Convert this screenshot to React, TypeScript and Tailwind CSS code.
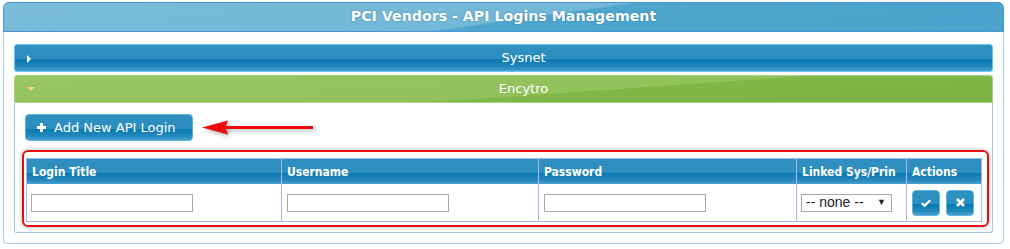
const blueGloss =
  'bg-[linear-gradient(to_bottom,#2f90c1_0%,#2c8ebf_55%,#0878b1_56%,#2689bf_85%,#47a1d0_100%)]';

const columns = [
  { title: 'Login Title', width: 'w-[254px]' },
  { title: 'Username', width: 'w-[257px]' },
  { title: 'Password', width: 'w-[258px]' },
  { title: 'Linked Sys/Prin', width: 'w-[110px]' },
  { title: 'Actions', width: 'w-[75px]' },
];

function TextCell() {
  return (
    <div className="h-[18px] w-[162px] border border-[#a9a9a9] bg-white" />
  );
}

function IconButton({ children }: { children: React.ReactNode }) {
  return (
    <div className={`flex h-[26px] w-[28px] items-center justify-center rounded-[4px] border border-[#5fb2de] ${blueGloss}`}>
      {children}
    </div>
  );
}

export default function App() {
  return (
    <div className="min-h-screen bg-white pl-[3px] pt-[2px] font-['DejaVu_Sans',sans-serif]">
      <div className="w-[1001px] rounded-t-[6px] rounded-b-[4px] border border-[#a6c9e2] bg-[#fdfefe]">
        {/* page title */}
        <div className="-m-px flex h-[30px] items-center justify-center rounded-t-[6px] border border-[#4b92d8] bg-[linear-gradient(172deg,#7abcd9_0%,#74b8d7_52%,#4ea6ce_53%,#49a2cb_100%)]">
          <h1 className="text-[14.2px] font-bold text-white [text-shadow:0_0_2px_rgba(40,110,160,0.7)]">
            PCI Vendors - API Logins Management
          </h1>
        </div>

        <div className="px-[10px] pt-[13px] pb-[10px]">
          {/* Sysnet (collapsed) */}
          <div className={`relative flex h-[28px] items-center justify-center rounded-[3px] border border-[#6cc6ee] pl-[40px] ${blueGloss}`}>
            <span className="absolute left-[12px] top-[10px] h-0 w-0 border-y-[4px] border-l-[4px] border-y-transparent border-l-white" />
            <span className="text-[13px] text-white">Sysnet</span>
          </div>

          {/* Encytro (expanded) */}
          <div className="relative mt-[3px] flex h-[28px] items-center justify-center rounded-t-[3px] border border-[#a9d47e] pl-[40px] bg-[linear-gradient(176deg,#97c662_0%,#92c25c_58%,#7fb748_59%,#7ab443_100%)]">
            <span className="absolute left-[12px] top-[11px] h-0 w-0 border-x-[4px] border-t-[4px] border-x-transparent border-t-[#f6d66a]" />
            <span className="text-[13px] text-white">Encytro</span>
          </div>

          <div className="rounded-b-[3px] border border-t-0 border-[#a6c9e2] bg-white pl-[7px] pr-[3px] pt-[11px] pb-[5px]">
            <div className="flex items-center pl-[3px]">
              <div className={`flex h-[27px] w-[168px] items-center gap-[8px] rounded-[4px] border border-[#5fb2de] pl-[11px] text-[13px] text-white ${blueGloss}`}>
                <svg width="9" height="9" viewBox="0 0 9 9">
                  <path d="M3 0h3v3h3v3H6v3H3V6H0V3h3z" fill="white" />
                </svg>
                Add New API Login
              </div>
              <svg width="114" height="20" viewBox="0 0 114 20" className="ml-[9px] drop-shadow-[2px_2px_2px_rgba(0,0,0,0.3)]">
                <path d="M0 9.5 L26 2.5 L24 8 L111 8 L111 11 L24 11 L26 16.5 Z" fill="#ee0a0a" />
              </svg>
            </div>

            {/* login grid, highlighted */}
            <div className="mt-[9px] rounded-[6px] border-2 border-[#e51010] pt-[6px] pr-[5px] pb-[3px] pl-[2px] shadow-[0_0_4px_rgba(0,0,0,0.3)]">
              <div className="w-[956px] border border-[#a4b6e6] font-['DejaVu_Sans_Condensed','DejaVu_Sans',sans-serif]">
                <div className={`flex h-[25px] ${blueGloss}`}>
                  {columns.map((c, i) => (
                    <div
                      key={c.title}
                      className={`${c.width} flex items-center pl-[5px] text-[12px] font-bold text-white ${i > 0 ? 'border-l border-[#a7b8e6]' : ''}`}
                    >
                      {c.title}
                    </div>
                  ))}
                </div>
                <div className="flex h-[37px] bg-white">
                  <div className="flex w-[254px] items-center pl-[4px]"><TextCell /></div>
                  <div className="flex w-[257px] items-center border-l border-[#a7b8e6] pl-[5px]"><TextCell /></div>
                  <div className="flex w-[258px] items-center border-l border-[#a7b8e6] pl-[5px]"><TextCell /></div>
                  <div className="flex w-[110px] items-center border-l border-[#a7b8e6] pl-[4px]">
                    <div className="flex h-[18px] w-[91px] items-center justify-between border border-[#a9a9a9] bg-white pr-[5px] pl-[4px] font-['Liberation_Sans',sans-serif] text-[14px] text-[#222]">
                      <span>-- none --</span>
                      <span className="text-[9px]">▼</span>
                    </div>
                  </div>
                  <div className="flex w-[75px] items-center gap-[6px] border-l border-[#a7b8e6] pl-[5px]">
                    <IconButton>
                      <svg width="10" height="8" viewBox="0 0 10 8">
                        <path d="M0.8 4.2 L3.6 6.8 L9.2 1.2" stroke="white" strokeWidth="2.2" fill="none" />
                      </svg>
                    </IconButton>
                    <IconButton>
                      <svg width="9" height="9" viewBox="0 0 9 9">
                        <path d="M1 1 L8 8 M8 1 L1 8" stroke="white" strokeWidth="2.6" />
                      </svg>
                    </IconButton>
                  </div>
                </div>
              </div>
            </div>
          </div>
        </div>
      </div>
    </div>
  );
}
